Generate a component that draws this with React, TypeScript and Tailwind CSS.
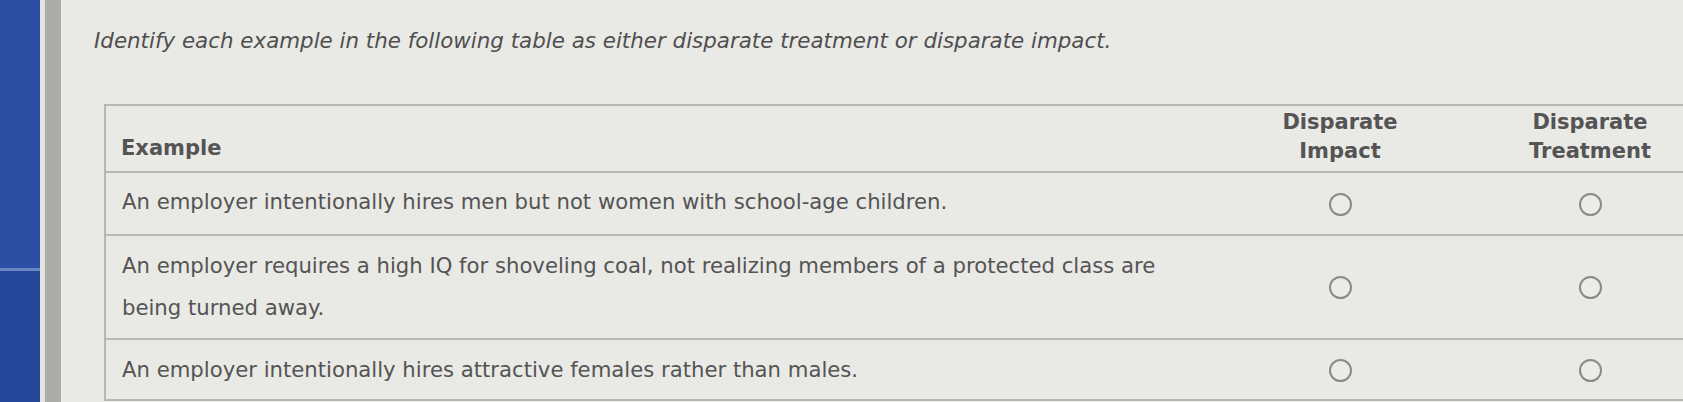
import React from "react";

const rows = [
  ["An employer intentionally hires men but not women with school-age children."],
  [
    "An employer requires a high IQ for shoveling coal, not realizing members of a protected class are",
    "being turned away.",
  ],
  ["An employer intentionally hires attractive females rather than males."],
];

const Radio = () => (
  <span className="inline-block align-middle w-[23px] h-[23px] rounded-full border-2 border-[#8a8a88] bg-[#ebebe8]" />
);

export default function App() {
  return (
    <div
      className="flex h-[402px] w-full overflow-hidden bg-[#e9e9e6]"
      style={{ fontFamily: '"DejaVu Sans", Verdana, sans-serif' }}
    >
      <div className="w-[40px] shrink-0 flex flex-col bg-[#2b4b9f]">
        <div className="h-[268px] bg-[#2d4fa3]" />
        <div className="h-[3px] bg-[#6a86c6]" />
        <div className="flex-1 bg-[#26469a]" />
      </div>
      <div className="w-[5px] shrink-0 bg-[#e4e4e1]" />
      <div className="w-[16px] shrink-0 bg-[#acaca8]" />
      <div className="flex-1 min-w-0 overflow-hidden pl-[33px] pt-[26px]">
        <p className="italic text-[21.4px] text-[#4f4f4f] leading-[30px] whitespace-nowrap">
          Identify each example in the following table as either disparate treatment or disparate impact.
        </p>
        <table className="mt-[48px] ml-[10px] w-[1620px] border-collapse table-fixed text-[#545454]">
          <colgroup>
            <col className="w-[1120px]" />
            <col className="w-[230px]" />
            <col className="w-[270px]" />
          </colgroup>
          <thead>
            <tr className="h-[67px] border-t-[2px] border-b-[2px] border-[#b7b7b5]">
              <th className="border-l-[2px] border-[#b7b7b5] text-left align-bottom pb-[7px] pl-[15px] text-[21px] font-bold">
                Example
              </th>
              <th className="text-center text-[21px] font-bold leading-[29px] align-middle pb-[4px]">
                Disparate
                <br />
                Impact
              </th>
              <th className="text-center text-[21px] font-bold leading-[29px] align-middle pb-[4px]">
                Disparate
                <br />
                Treatment
              </th>
            </tr>
          </thead>
          <tbody>
            {rows.map((lines, i) => (
              <tr
                key={i}
                className={`border-b-[2px] border-[#b7b7b5] ${
                  i === 1 ? "h-[104px]" : i === 0 ? "h-[63px]" : "h-[61px]"
                }`}
              >
                <td
                  className={`border-l-[2px] border-[#b7b7b5] pl-[16px] text-[21.2px] leading-[42px] whitespace-nowrap ${
                    i === 0 ? "pb-[4px]" : ""
                  }`}
                >
                  {lines.map((l, j) => (
                    <div key={j}>{l}</div>
                  ))}
                </td>
                <td className="text-center align-middle">
                  <Radio />
                </td>
                <td className="text-center align-middle">
                  <Radio />
                </td>
              </tr>
            ))}
          </tbody>
        </table>
      </div>
    </div>
  );
}
